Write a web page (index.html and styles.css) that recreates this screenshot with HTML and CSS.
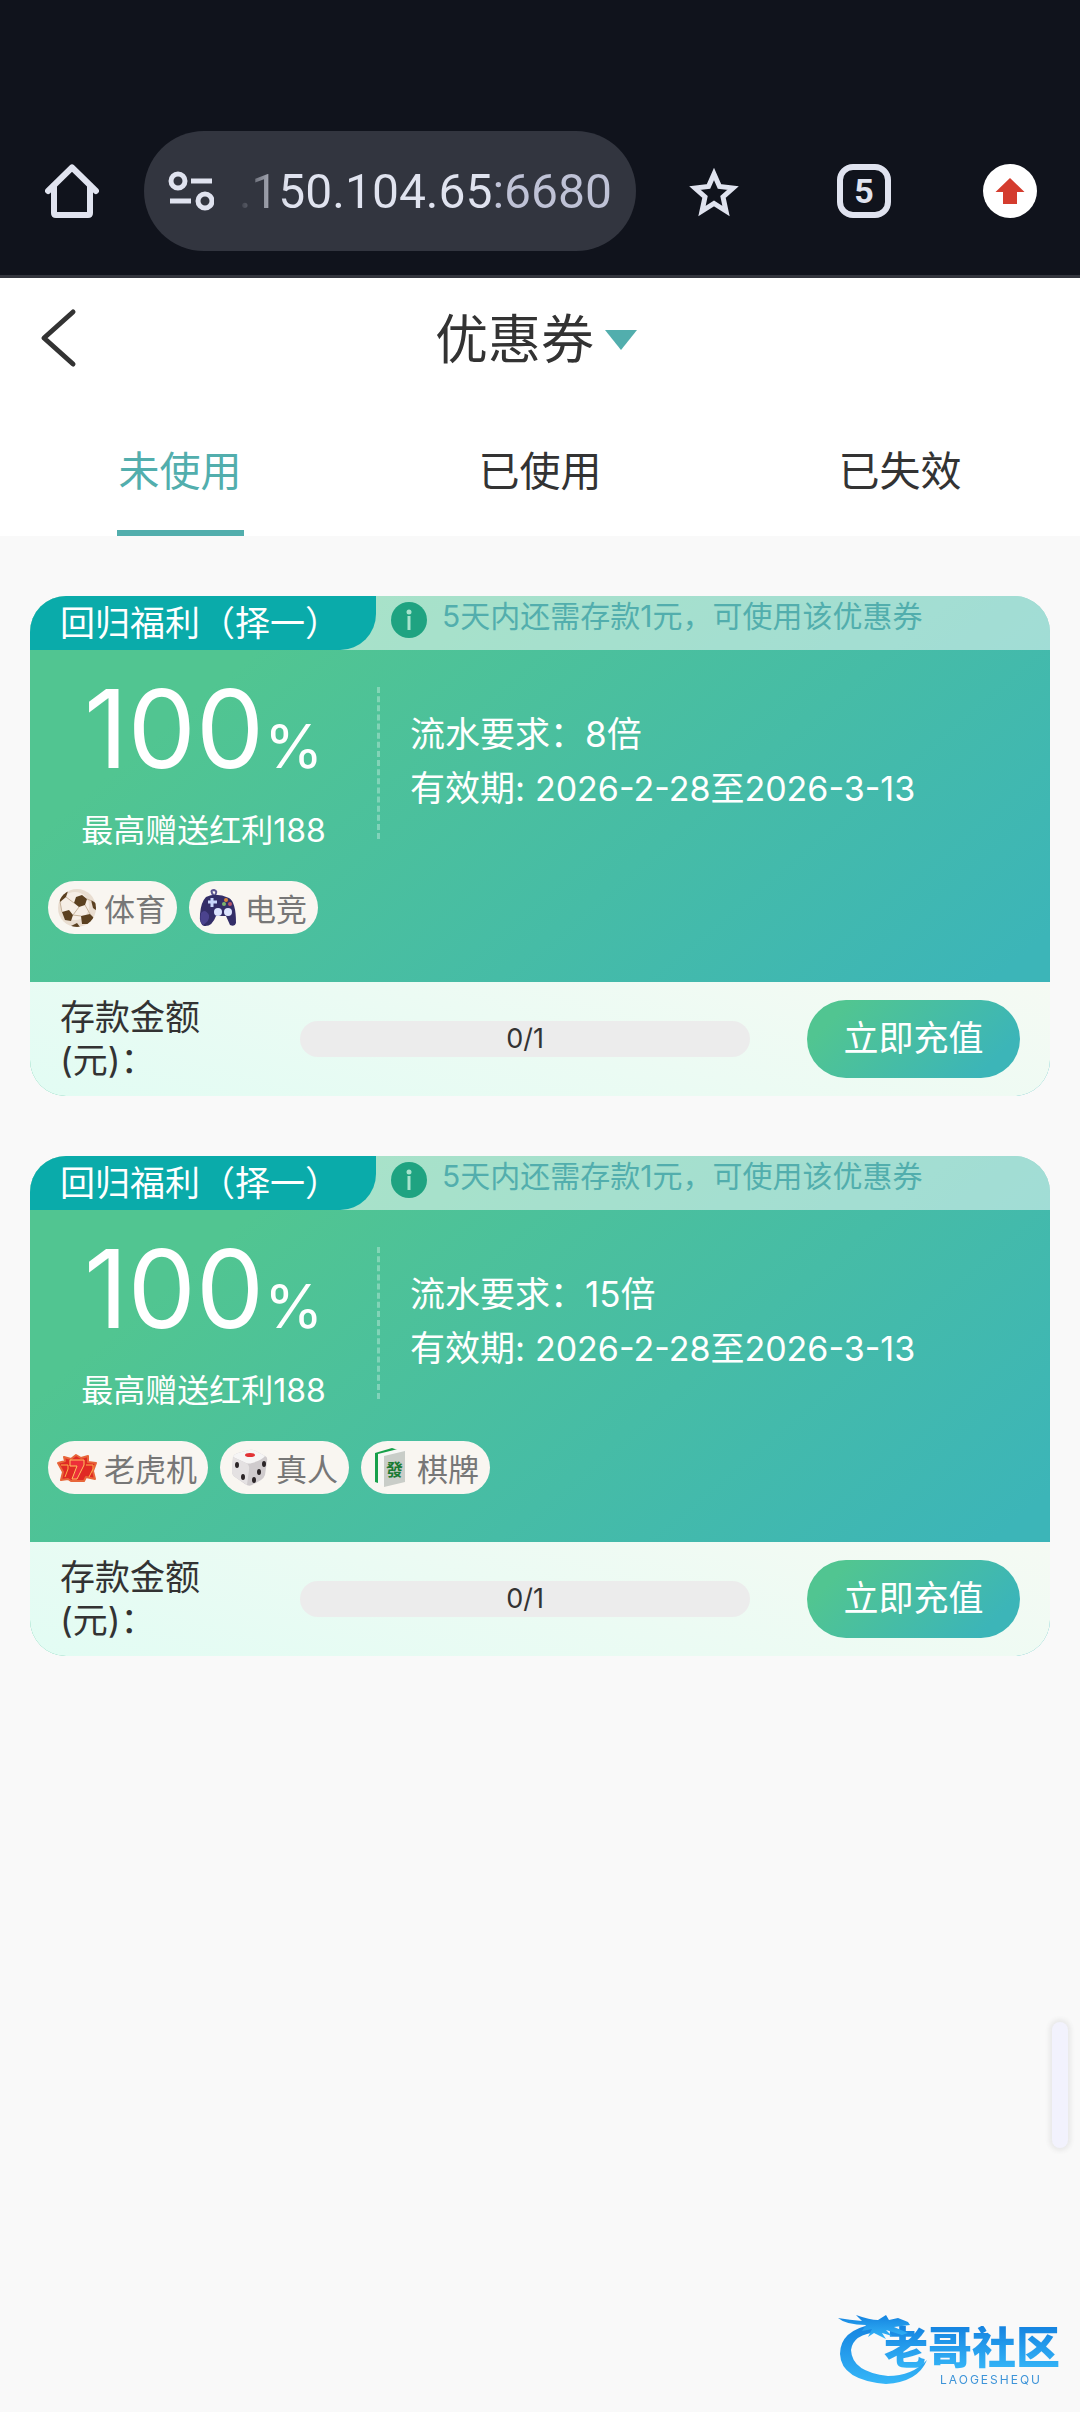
FILE: index.html
```html
<!DOCTYPE html>
<html lang="zh-CN">
<head>
    <meta charset="UTF-8">
    <meta name="viewport" content="width=device-width, initial-scale=1.0">
    <title>优惠券</title>
    <link rel="stylesheet" href="styles.css">
</head>
<body>
    <header class="browser-bar">
        <button type="button" class="bar-btn home-btn" aria-label="Home">
            <svg width="54" height="54" viewBox="0 0 54 54" fill="none" stroke="#e0e3ef" stroke-width="6" stroke-linejoin="round" stroke-linecap="round">
                <path d="M3 27 L27 3.500 L51 27"/>
                <path d="M9 22 V49 Q9 51 11 51 H43 Q45 51 45 49 V22"/>
            </svg>
        </button>
        <div class="address">
            <svg width="46" height="40" viewBox="0 0 46 40" fill="none" stroke="#e0e3ef" stroke-width="5">
                <circle cx="10" cy="10" r="7"/>
                <path d="M23 10 H44 M2 30 H23"/>
                <circle cx="37" cy="30" r="7"/>
            </svg>
            <input type="text" class="url" value=".150.104.65:6680" aria-label="Address" readonly>
        </div>
        <div class="bar-actions">
            <button type="button" class="bar-btn" aria-label="Bookmark">
                <svg width="54" height="54" viewBox="0 0 54 54" fill="none" stroke="#e0e3ef" stroke-width="5">
                    <path d="M27 10 L32.500 22.500 L46 24 L36 33 L39 47 L27 39.500 L15 47 L18 33 L8 24 L21.500 22.500 Z"/>
                </svg>
            </button>
            <button type="button" class="bar-btn" aria-label="Tabs"><span class="tab-count">5</span></button>
            <button type="button" class="bar-btn update-btn" aria-label="Update">
                <svg width="54" height="54" viewBox="0 0 54 54">
                    <circle cx="27" cy="27" r="27" fill="#fff"/>
                    <path d="M27 14 L41.500 28 H34 V40 H20 V28 H12.500 Z" fill="#d43c2e"/>
                </svg>
            </button>
        </div>
    </header>

    <nav class="page-head">
        <div class="title-row">
            <button type="button" class="back-btn" aria-label="返回">
                <svg width="40" height="60" viewBox="0 0 40 60" fill="none" stroke="#333" stroke-width="5" stroke-linecap="round" stroke-linejoin="round">
                    <path d="M35 4 L6 30 L35 56"/>
                </svg>
            </button>
            <button type="button" class="title-btn">优惠券
                <svg width="32" height="20" viewBox="0 0 32 20"><path d="M0 0 H32 L16 20 Z" fill="#52aead"/></svg>
            </button>
        </div>
        <div class="tabs">
            <button type="button" class="tab active">未使用</button>
            <button type="button" class="tab">已使用</button>
            <button type="button" class="tab">已失效</button>
        </div>
    </nav>

    <main class="coupons">
        <section class="coupon">
            <div class="coupon-top">
                <span class="coupon-name">回归福利（择一）</span>
                <svg class="info" width="36" height="36" viewBox="0 0 36 36">
                    <circle cx="18" cy="18" r="18" fill="#1fa381"/>
                    <circle cx="18" cy="10" r="2.500" fill="#a8e3cd"/>
                    <path d="M18 14 V28" stroke="#a8e3cd" stroke-width="3"/>
                </svg>
                <span class="coupon-tip">5天内还需存款1元，可使用该优惠券</span>
            </div>
            <div class="coupon-body">
                <div class="coupon-main">
                    <div class="bonus">
                        <div class="rate">100<span class="percent">%</span></div>
                        <div class="max">最高赠送红利188</div>
                    </div>
                    <div class="terms">
                        <p>流水要求：8倍</p>
                        <p>有效期: <span class="dates">2026-2-28至2026-3-13</span></p>
                    </div>
                </div>
                <div class="tags">
                    <span class="tag">
                        <svg width="40" height="40" viewBox="0 0 40 40">
                            <defs><clipPath id="ball"><circle cx="20" cy="20" r="19"/></clipPath></defs>
                            <circle cx="20" cy="20" r="19" fill="#e9ddd0"/>
                            <circle cx="18" cy="18" r="14" fill="#f6eee6"/>
                            <g clip-path="url(#ball)" fill="#5b4020">
                                <path d="M19 9 L25 7 L30 11 L28 17 L22 19 L17 15 Z"/>
                                <path d="M5 24 L12 22 L16 27 L14 33 L8 32 Z"/>
                                <path d="M2 9 L11 3 L9 9 L3 14 Z"/>
                                <path d="M24 28 L33 26 L37 30 L32 36 L25 36 Z"/>
                                <path d="M12 39 L20 35 L23 39 Z"/>
                                <path d="M34 12 L40 16 V23 L36 20 Z"/>
                            </g>
                            <path d="M22 19 L16 27 M28 17 L33 26 M17 15 L9 9 M16 27 L24 28 M30 11 L35 13 M5 24 L3 14" stroke="#c7b39c" fill="none"/>
                        </svg>
                        体育
                    </span>
                    <span class="tag">
                        <svg width="40" height="40" viewBox="0 0 40 40">
                            <path d="M16 8 Q11 2 16 2 Q20 3 17 7" fill="none" stroke="#5a5590" stroke-width="2"/>
                            <path d="M8 9 Q18 4 31 10 Q38 14 38 35 Q37 39 32 37 L28 28 L18 28 Q14 39 6 38 Q1 36 2 26 Q3 14 8 9 Z" fill="#332e68"/>
                            <path d="M3 25 Q7 20 11 27 Q12 33 5 37 Q1 34 3 25 Z" fill="#4b438e"/>
                            <path d="M14 10 V19 M10 14 H19" stroke="#c8d6fb" stroke-width="3"/>
                            <circle cx="20" cy="24" r="4" fill="#dce4ff"/>
                            <circle cx="30" cy="24" r="4" fill="#dce4ff"/>
                            <circle cx="28" cy="12" r="2" fill="#d9823d"/>
                            <circle cx="32" cy="16" r="2" fill="#b85568"/>
                            <circle cx="26" cy="16" r="2" fill="#7cb56d"/>
                        </svg>
                        电竞
                    </span>
                </div>
            </div>
            <div class="coupon-foot">
                <span class="deposit-label">存款金额(元)：</span>
                <div class="progress">0/1</div>
                <button type="button" class="recharge-btn">立即充值</button>
            </div>
        </section>

        <section class="coupon">
            <div class="coupon-top">
                <span class="coupon-name">回归福利（择一）</span>
                <svg class="info" width="36" height="36" viewBox="0 0 36 36">
                    <circle cx="18" cy="18" r="18" fill="#1fa381"/>
                    <circle cx="18" cy="10" r="2.500" fill="#a8e3cd"/>
                    <path d="M18 14 V28" stroke="#a8e3cd" stroke-width="3"/>
                </svg>
                <span class="coupon-tip">5天内还需存款1元，可使用该优惠券</span>
            </div>
            <div class="coupon-body">
                <div class="coupon-main">
                    <div class="bonus">
                        <div class="rate">100<span class="percent">%</span></div>
                        <div class="max">最高赠送红利188</div>
                    </div>
                    <div class="terms">
                        <p>流水要求：15倍</p>
                        <p>有效期: <span class="dates">2026-2-28至2026-3-13</span></p>
                    </div>
                </div>
                <div class="tags">
                    <span class="tag">
                        <svg width="40" height="40" viewBox="0 0 40 40">
                            <path d="M1 15 L8 13 L7 9 L14 11 L19 7 L24 10 L31 8 L31 14 L39 15 L36 23 L38 31 L29 29 L27 33 L14 33 L11 31 L4 32 L6 24 Z" fill="#e02a24" stroke="#e8663a" stroke-width="2" stroke-linejoin="round"/>
                            <path d="M13 12 H27 V17 L20 31 H15 L20 18 H13 Z" fill="#ed2f3a" stroke="#ffc45e"/>
                            <path d="M4 17 H11 V21 L8 29 M29 17 H36 V21 L32 29" fill="none" stroke="#ffb04a"/>
                        </svg>
                        老虎机
                    </span>
                    <span class="tag">
                        <svg width="40" height="40" viewBox="0 0 40 40">
                            <path d="M4 9 Q5 6 9 5 L20 2 Q23 1 27 3 L36 8 Q39 9 38 13 L36 27 Q35 30 32 32 L23 37 Q20 39 16 36 L6 29 Q3 27 3 23 Z" fill="#cfcbcd"/>
                            <path d="M4 9 Q5 6 9 5 L20 2 Q23 1 27 3 L36 8 Q33 12 23 15 Q20 16 17 15 Z" fill="#f6f5f5"/>
                            <path d="M4 9 L17 15 Q21 17 20 22 L18 37 L6 29 Q3 27 3 23 Z" fill="#e4e1e2"/>
                            <ellipse cx="21" cy="7" rx="5" ry="2" fill="#e23236"/>
                            <g fill="#2b2527">
                                <ellipse cx="8" cy="17" rx="2" ry="3"/>
                                <ellipse cx="14" cy="29" rx="2" ry="3"/>
                                <ellipse cx="35" cy="16" rx="2" ry="3"/>
                                <ellipse cx="30" cy="24" rx="2" ry="3"/>
                                <ellipse cx="25" cy="32" rx="2" ry="3"/>
                            </g>
                        </svg>
                        真人
                    </span>
                    <span class="tag">
                        <svg width="40" height="40" viewBox="0 0 40 40">
                            <path d="M5 5 L22 0 L28 2 L11 36 L5 34 Z" fill="#18a04a"/>
                            <path d="M8 6 L28 1 L36 3 L14 38 L8 36 Z" fill="#f7f7f5"/>
                            <path d="M14 8 L35 3 V34 L14 39 Z" fill="#c9cdc8"/>
                            <text x="16" y="28" font-size="17" font-weight="700" fill="#1b7a33">發</text>
                        </svg>
                        棋牌
                    </span>
                </div>
            </div>
            <div class="coupon-foot">
                <span class="deposit-label">存款金额(元)：</span>
                <div class="progress">0/1</div>
                <button type="button" class="recharge-btn">立即充值</button>
            </div>
        </section>
    </main>

    <div class="side-handle"></div>

    <div class="watermark">
        <svg class="dragon" width="92" height="76" viewBox="0 0 92 76">
            <defs>
                <linearGradient id="blue" x1="0" y1="0" x2="0" y2="1">
                    <stop offset="0" stop-color="#1583e0"/>
                    <stop offset="1" stop-color="#35b6f8"/>
                </linearGradient>
            </defs>
            <g fill="url(#blue)">
                <path d="M36 12 Q2 18 2 42 Q3 68 48 72 Q80 70 89 48 Q74 64 50 64 Q14 60 13 38 Q15 22 40 20 Z"/>
                <path d="M0 6 Q12 8 24 9 L18 3 Q32 8 40 8 L48 3 L51 8 L60 6 L70 10 L72 13 L56 15 L70 21 L64 23 L48 18 L54 24 L44 21 L48 27 L36 21 L30 25 L34 17 L24 19 L28 13 Q8 13 0 6 Z"/>
            </g>
        </svg>
        <div class="brand">
            <strong>老哥社区</strong>
            <small>LAOGESHEQU</small>
        </div>
    </div>
</body>
</html>
```

FILE: styles.css
```css
* { box-sizing: border-box; }
body {
    margin: 0;
    min-height: 100vh;
    background: #f9f9f9;
    color: #333;
    font-family: Inter, "Noto Sans CJK SC", sans-serif;
}
button { padding: 0; border: 0; background: none; color: inherit; font: inherit; cursor: pointer; }
svg { display: block; flex: none; }
p { margin: 0; }

/* browser bar */
.browser-bar {
    display: flex;
    align-items: center;
    padding: 131px 0 24px;
    background: #10131c;
    border-bottom: 3px solid #33353d;
}
.bar-btn { display: flex; justify-content: center; align-items: center; width: 150px; height: 54px; }
.home-btn { width: 144px; }
.update-btn { width: 141px; }
.bar-actions { display: flex; margin-left: 3px; }
.address {
    flex: 1;
    min-width: 0;
    display: flex;
    align-items: center;
    height: 120px;
    padding: 0 24px;
    border-radius: 60px;
    background: #32353f;
}
.url {
    flex: 1;
    min-width: 0;
    padding: 0;
    border: 0;
    outline: 0;
    font: 48px Roboto, sans-serif;
    text-align: right;
    color: transparent;
    background: linear-gradient(to left, #bfc2d6 120px, #e0e3ef 120px, #e0e3ef 325px, #32353f 375px);
    -webkit-background-clip: text;
    background-clip: text;
}
.tab-count {
    width: 54px;
    height: 54px;
    border: 6px solid #e0e3ef;
    border-radius: 16px;
    color: #e0e3ef;
    font: 700 34px/42px Roboto, sans-serif;
}

/* title and tabs */
.page-head { background: #fff; }
.title-row { display: grid; grid-template-columns: 112px 1fr 120px; align-items: center; height: 124px; }
.back-btn { padding: 0 0 4px 38px; }
.title-btn { display: flex; justify-content: center; align-items: center; gap: 11px; font-size: 53px; line-height: 80px; }
.tabs { display: grid; grid-template-columns: repeat(3, 1fr); justify-items: center; height: 134px; }
.tab { padding: 3px 2px 0; border-bottom: 6px solid transparent; font-size: 41px; }
.tab.active { color: #52aead; border-color: #52aead; }

/* coupons */
.coupons { display: flex; flex-direction: column; gap: 60px; padding: 60px 30px; }
.coupon {
    border-radius: 36px;
    overflow: hidden;
    background: linear-gradient(140deg, #51c591 18%, #46bca6 57%, #3cb5b8 88%);
}
.coupon-top { display: flex; height: 54px; background: rgba(255, 255, 255, .5); }
.coupon-name {
    width: 346px;
    padding-left: 30px;
    border-bottom-right-radius: 36px;
    background: #0aabaa;
    color: #fff;
    font-size: 35px;
    line-height: 54px;
    white-space: nowrap;
}
.info { margin: 6px 15px; }
.coupon-tip { color: #52aead; font-size: 30px; line-height: 40px; white-space: nowrap; }
.coupon-body { height: 332px; padding: 37px 18px 0; color: #fff; }
.coupon-main { display: flex; height: 152px; }
.bonus {
    width: 332px;
    padding-right: 18px;
    text-align: center;
    border-right: 3px dashed rgba(255, 255, 255, .3);
}
.rate { height: 84px; font-size: 108px; line-height: 84px; white-space: nowrap; }
.percent { font-size: 60px; }
.max { margin-top: 36px; font-size: 32px; line-height: 48px; }
.terms { padding: 20px 0 0 30px; font-size: 35px; line-height: 54px; }
.dates { font-size: 34px; }
.tags { display: flex; gap: 12px; margin-top: 42px; }
.tag {
    display: flex;
    align-items: center;
    gap: 7px;
    height: 53px;
    padding: 0 11px 0 9px;
    border-radius: 27px;
    background: #f9f6f1;
    color: #777;
    font-size: 31px;
}
.coupon-foot {
    display: flex;
    align-items: center;
    height: 114px;
    padding: 0 30px;
    background: linear-gradient(15deg, #e2fcf3, #f5faf3);
}
.deposit-label { width: 240px; padding-right: 90px; font-size: 35px; line-height: 43px; }
.progress {
    flex: 1;
    height: 36px;
    margin-right: 57px;
    border-radius: 18px;
    background: #ececec;
    font-size: 27px;
    line-height: 36px;
    text-align: center;
}
.recharge-btn {
    width: 213px;
    height: 78px;
    padding-bottom: 8px;
    border-radius: 39px;
    background: linear-gradient(135deg, #51c591 15%, #3cb5b8 85%);
    color: #fff;
    font-size: 35px;
}

/* floating over the page */
.side-handle {
    position: fixed;
    right: 12px;
    bottom: 264px;
    width: 16px;
    height: 126px;
    border-radius: 8px;
    background: #f2f2fd;
    box-shadow: 0 0 4px 3px #e9e9e9;
}
.watermark { position: fixed; right: 20px; bottom: 24px; width: 222px; height: 76px; }
.dragon { position: absolute; left: 0; top: 0; }
.brand { display: flex; flex-direction: column; align-items: flex-end; padding-top: 14px; }
.brand strong {
    font-size: 44px;
    font-weight: 900;
    line-height: 44px;
    color: transparent;
    background: linear-gradient(#1583e0, #35b6f8);
    -webkit-background-clip: text;
    background-clip: text;
}
.brand small { padding-right: 18px; font-size: 12px; line-height: 20px; letter-spacing: 2px; color: #3d94d8; }
```
